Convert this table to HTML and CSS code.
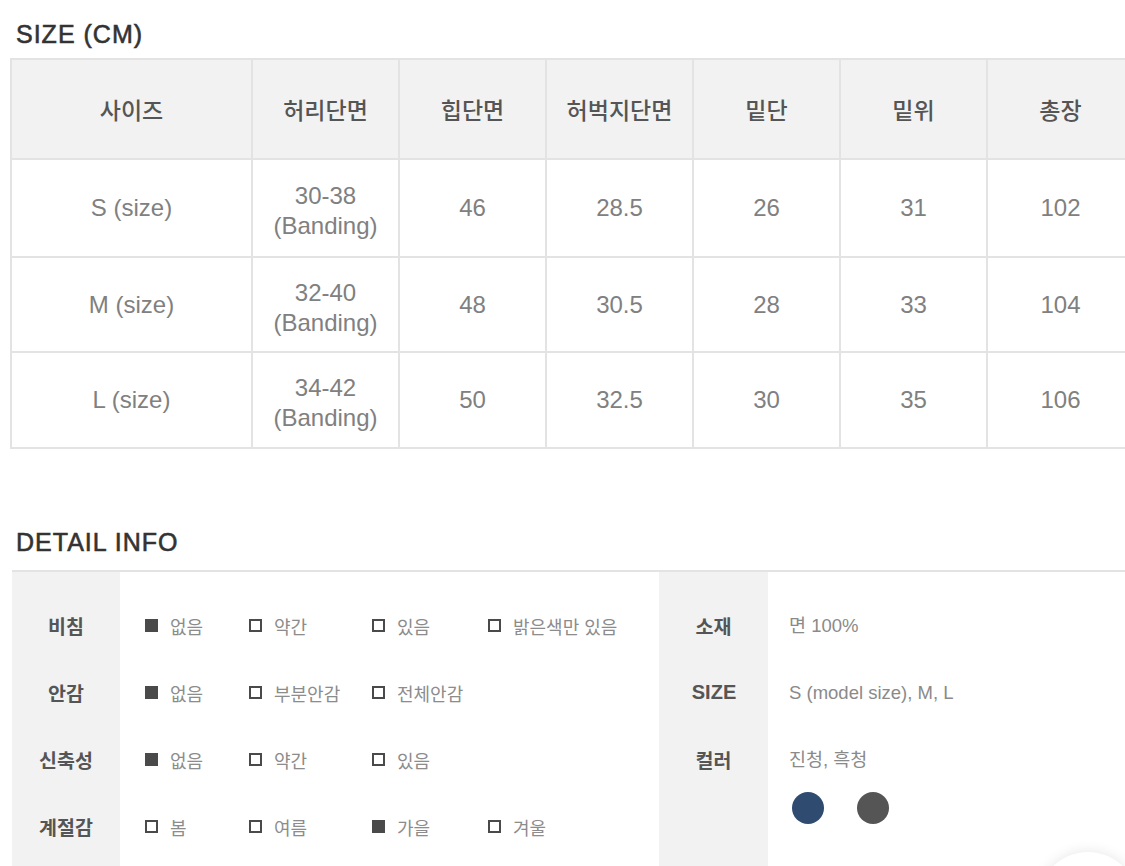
FILE: index.html
```html
<!DOCTYPE html>
<html lang="ko">
<head>
<meta charset="utf-8">
<title>Size &amp; Detail</title>
<link rel="stylesheet" href="styles.css">
</head>
<body>
<main class="page">
  <h2 class="section-title size-title">SIZE (CM)</h2>
  <table class="size-table">
    <colgroup>
      <col class="c-first"><col><col><col><col><col><col>
    </colgroup>
    <thead>
      <tr class="head-row">
        <th>사이즈</th><th>허리단면</th><th>힙단면</th><th>허벅지단면</th><th>밑단</th><th>밑위</th><th>총장</th>
      </tr>
    </thead>
    <tbody>
      <tr class="r1">
        <td>S (size)</td><td class="two">30-38<br>(Banding)</td><td>46</td><td>28.5</td><td>26</td><td>31</td><td>102</td>
      </tr>
      <tr class="r2">
        <td>M (size)</td><td class="two">32-40<br>(Banding)</td><td>48</td><td>30.5</td><td>28</td><td>33</td><td>104</td>
      </tr>
      <tr class="r3">
        <td>L (size)</td><td class="two">34-42<br>(Banding)</td><td>50</td><td>32.5</td><td>30</td><td>35</td><td>106</td>
      </tr>
    </tbody>
  </table>

  <h2 class="section-title detail-title">DETAIL INFO</h2>
  <section class="detail">
    <div class="half left">
      <div class="labels">
        <div class="label">비침</div>
        <div class="label">안감</div>
        <div class="label">신축성</div>
        <div class="label">계절감</div>
      </div>
      <div class="options">
        <div class="opt-row">
          <span class="opt"><i class="box on"></i>없음</span>
          <span class="opt"><i class="box"></i>약간</span>
          <span class="opt"><i class="box"></i>있음</span>
          <span class="opt"><i class="box"></i>밝은색만 있음</span>
        </div>
        <div class="opt-row">
          <span class="opt"><i class="box on"></i>없음</span>
          <span class="opt"><i class="box"></i>부분안감</span>
          <span class="opt"><i class="box"></i>전체안감</span>
        </div>
        <div class="opt-row">
          <span class="opt"><i class="box on"></i>없음</span>
          <span class="opt"><i class="box"></i>약간</span>
          <span class="opt"><i class="box"></i>있음</span>
        </div>
        <div class="opt-row">
          <span class="opt"><i class="box"></i>봄</span>
          <span class="opt"><i class="box"></i>여름</span>
          <span class="opt"><i class="box on"></i>가을</span>
          <span class="opt"><i class="box"></i>겨울</span>
        </div>
      </div>
    </div>
    <div class="half right">
      <div class="labels">
        <div class="label">소재</div>
        <div class="label latin">SIZE</div>
        <div class="label">컬러</div>
      </div>
      <div class="values">
        <div class="val">면 100%</div>
        <div class="val">S (model size), M, L</div>
        <div class="val color-val">
          <span>진청, 흑청</span>
          <div class="swatches">
            <span class="swatch navy"></span>
            <span class="swatch charcoal"></span>
          </div>
        </div>
      </div>
    </div>
  </section>
  <div class="float-btn"></div>
</main>
</body>
</html>
```

FILE: styles.css
```css
html, body {
  margin: 0;
  padding: 0;
  background: #ffffff;
  overflow: hidden;
}

.page {
  position: relative;
  width: 1125px;
  height: 866px;
  overflow: hidden;
  font-family: "Liberation Sans", "Noto Sans CJK KR", sans-serif;
}

.section-title {
  margin: 0;
  padding-left: 16px;
  font-family: "Liberation Sans", "Noto Sans CJK KR", sans-serif;
  font-size: 25px;
  line-height: 30px;
  font-weight: 400;
  color: #333333;
  letter-spacing: 1px;
  -webkit-text-stroke: 0.6px #333333;
}

.size-title {
  padding-top: 19px;
  padding-bottom: 9px;
}

.size-table {
  margin-left: 10px;
  width: 1123px;
  table-layout: fixed;
  border-collapse: collapse;
  border: 2px solid #e3e3e3;
}

.size-table col {
  width: 147px;
}

.size-table col.c-first {
  width: 241px;
}

.size-table th,
.size-table td {
  border: 2px solid #e3e3e3;
  text-align: center;
  vertical-align: middle;
  padding: 0;
}

.size-table th {
  background: #f2f2f2;
  font-family: "Noto Sans CJK KR", sans-serif;
  font-size: 23px;
  font-weight: 500;
  color: #555555;
  height: 98px;
}

.size-table td {
  font-family: "Liberation Sans", "Noto Sans CJK KR", sans-serif;
  font-size: 24px;
  line-height: 30px;
  color: #808080;
}

.size-table td.two {
  padding-top: 6px;
}

.size-table tr.r1 td { height: 96px; }
.size-table tr.r2 td { height: 93px; }
.size-table tr.r3 td { height: 94px; }
.size-table tr.r1 td.two { height: 90px; }
.size-table tr.r2 td.two { height: 87px; }
.size-table tr.r3 td.two { height: 88px; }

.detail-title {
  margin-top: 78px;
  padding-bottom: 13px;
}

.detail {
  margin-left: 12px;
  display: flex;
  border-top: 2px solid #e3e3e3;
  height: 320px;
}

.half {
  display: flex;
}

.half.left {
  width: 647px;
}

.half.right {
  flex: 1;
}

.labels {
  background: #f2f2f2;
  padding-top: 20px;
  display: flex;
  flex-direction: column;
}

.left .labels {
  width: 108px;
}

.right .labels {
  width: 109px;
}

.label {
  height: 67px;
  line-height: 67px;
  text-align: center;
  font-family: "Noto Sans CJK KR", sans-serif;
  font-size: 19.5px;
  font-weight: 700;
  color: #555555;
}

.label.latin {
  font-family: "Liberation Sans", sans-serif;
  font-size: 20px;
  padding-left: 1px;
}

.options {
  padding-top: 20px;
  padding-left: 25px;
  display: flex;
  flex-direction: column;
}

.opt-row {
  height: 67px;
  display: grid;
  grid-template-columns: 104px 123px 116px auto;
  align-items: center;
}

.opt {
  display: flex;
  align-items: center;
  font-family: "Noto Sans CJK KR", sans-serif;
  font-size: 18px;
  color: #8c8c8c;
  white-space: nowrap;
}

.box {
  display: inline-block;
  width: 9px;
  height: 9px;
  border: 2px solid #4a4a4a;
  margin-right: 12px;
  background: #ffffff;
}

.box.on {
  background: #4a4a4a;
}

.values {
  padding-top: 20px;
  padding-left: 21px;
  display: flex;
  flex-direction: column;
}

.val {
  height: 67px;
  line-height: 67px;
  font-family: "Liberation Sans", "Noto Sans CJK KR", sans-serif;
  font-size: 18.5px;
  color: #8a8a8a;
}

.color-val {
  height: auto;
}

.swatches {
  display: flex;
  gap: 33px;
  margin-top: -1px;
  padding-left: 3px;
}

.swatch {
  width: 32px;
  height: 32px;
  border-radius: 50%;
}

.swatch.navy {
  background: #2f4b70;
}

.swatch.charcoal {
  background: #555555;
}

.float-btn {
  position: absolute;
  left: 1038px;
  top: 852px;
  width: 100px;
  height: 100px;
  border-radius: 50%;
  background: #ffffff;
  box-shadow: 0 0 14px rgba(0, 0, 0, 0.10);
}
```
